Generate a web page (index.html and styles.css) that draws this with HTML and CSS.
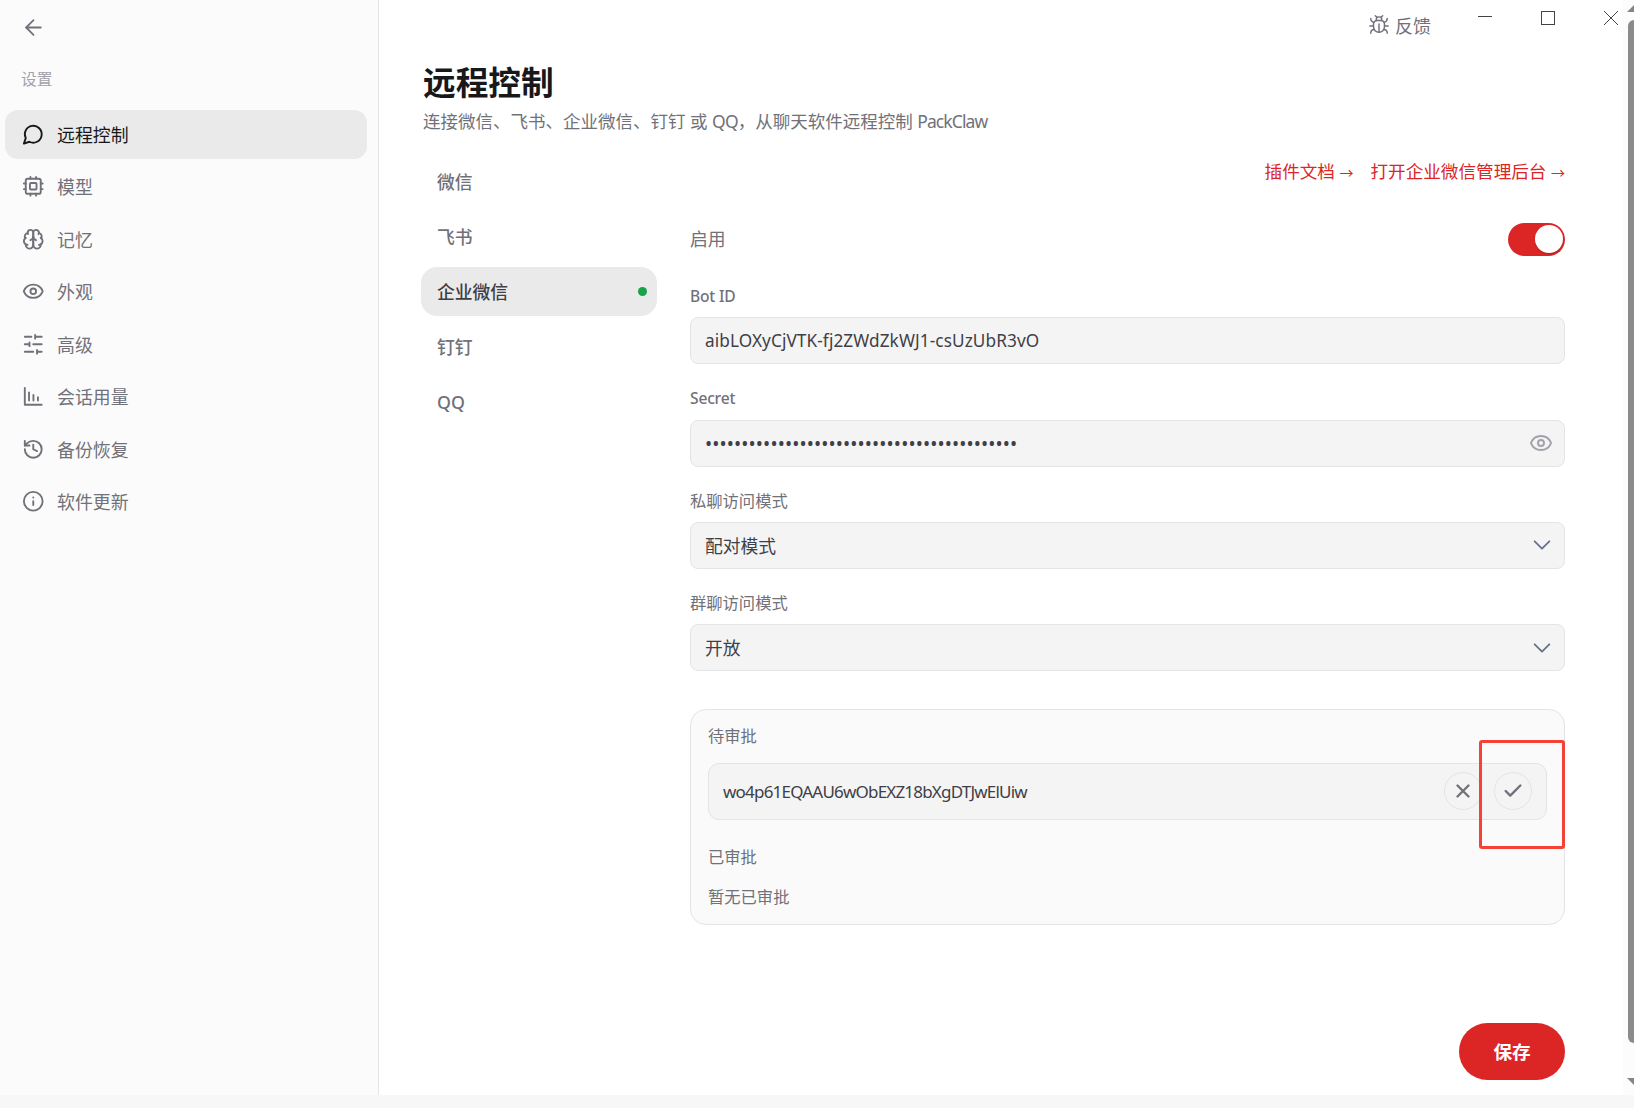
FILE: index.html
```html
<!DOCTYPE html>
<html lang="zh-CN">
<head>
    <meta charset="UTF-8">
    <meta name="viewport" content="width=device-width, initial-scale=1.0">
    <title>PackClaw</title>
    <link rel="stylesheet" href="styles.css">
</head>
<body>
    <div class="app">
        <aside class="sidebar">
            <button class="back-button" aria-label="返回">
                <svg class="icon" viewBox="0 0 24 24"><path d="m12 19-7-7 7-7"/><path d="M19 12H5"/></svg>
            </button>
            <div class="sidebar-title">设置</div>
            <nav class="menu">
                <a class="menu-item active">
                    <svg class="icon" viewBox="0 0 24 24"><path d="M7.9 20A9 9 0 1 0 4 16.1L2 22Z"/></svg>
                    <span>远程控制</span>
                </a>
                <a class="menu-item">
                    <svg class="icon" viewBox="0 0 24 24"><rect x="4" y="4" width="16" height="16" rx="2"/><rect x="8.5" y="8.5" width="7" height="7" rx="1"/><path d="M15 2v2M15 20v2M2 15h2M2 9h2M20 15h2M20 9h2M9 2v2M9 20v2"/></svg>
                    <span>模型</span>
                </a>
                <a class="menu-item">
                    <svg class="icon" viewBox="0 0 24 24"><path d="M12 5a3 3 0 1 0-5.997.125 4 4 0 0 0-2.526 5.77 4 4 0 0 0 .556 6.588A4 4 0 1 0 12 18Z"/><path d="M12 5a3 3 0 1 1 5.997.125 4 4 0 0 1 2.526 5.77 4 4 0 0 1-.556 6.588A4 4 0 1 1 12 18Z"/><path d="M15 13a4.5 4.5 0 0 1-3-4 4.5 4.5 0 0 1-3 4"/><path d="M17.599 6.5a3 3 0 0 0 .399-1.375M6.003 5.125A3 3 0 0 0 6.401 6.5M3.477 10.896a4 4 0 0 1 .585-.396M19.938 10.5a4 4 0 0 1 .585.396M6 18a4 4 0 0 1-1.967-.516M19.967 17.484A4 4 0 0 1 18 18"/></svg>
                    <span>记忆</span>
                </a>
                <a class="menu-item">
                    <svg class="icon" viewBox="0 0 24 24"><path d="M2.06 12.35a1 1 0 0 1 0-.7 10.75 10.75 0 0 1 19.88 0 1 1 0 0 1 0 .7 10.75 10.75 0 0 1-19.88 0"/><circle cx="12" cy="12" r="3"/></svg>
                    <span>外观</span>
                </a>
                <a class="menu-item">
                    <svg class="icon" viewBox="0 0 24 24"><path d="M21 4h-7M10 4H3M21 12h-9M8 12H3M21 20h-5M12 20H3M14 2v4M8 10v4M16 18v4"/></svg>
                    <span>高级</span>
                </a>
                <a class="menu-item">
                    <svg class="icon" viewBox="0 0 24 24"><path d="M3 3v18h18"/><path d="M7.5 16.5V8M12.2 16.5v-6M17 16.5V13"/></svg>
                    <span>会话用量</span>
                </a>
                <a class="menu-item">
                    <svg class="icon" viewBox="0 0 24 24"><path d="M3 12a9 9 0 1 0 9-9 9.75 9.75 0 0 0-6.74 2.74L3 8"/><path d="M3 3v5h5"/><path d="M12 7v5l4 2"/></svg>
                    <span>备份恢复</span>
                </a>
                <a class="menu-item">
                    <svg class="icon" viewBox="0 0 24 24"><circle cx="12" cy="12" r="10"/><path d="M12 16v-4M12 8h.01"/></svg>
                    <span>软件更新</span>
                </a>
            </nav>
        </aside>

        <main class="main">
            <div class="titlebar">
                <button class="feedback">
                    <svg class="icon" viewBox="0 0 24 24"><path d="m8 2 1.88 1.88M14.12 3.88 16 2M9 7.13v-1a3 3 0 1 1 6 0v1"/><path d="M12 20c-3.3 0-6-2.7-6-6v-3a4 4 0 0 1 4-4h4a4 4 0 0 1 4 4v3c0 3.3-2.7 6-6 6"/><path d="M12 20v-9M6.53 9C4.6 8.8 3 7.1 3 5M6 13H2M3 21c0-2.1 1.7-3.9 3.8-4M20.97 5c0 2.1-1.6 3.8-3.5 4M22 13h-4M17.2 17c2.1.1 3.8 1.9 3.8 4"/></svg>
                    <span>反馈</span>
                </button>
                <div class="window-buttons">
                    <svg viewBox="0 0 16 16"><path d="M1 6.5h14"/></svg>
                    <svg viewBox="0 0 16 16"><rect x="1.5" y="1.5" width="13" height="13"/></svg>
                    <svg viewBox="0 0 16 16"><path d="M1 1l14 14M15 1 1 15"/></svg>
                </div>
            </div>

            <div class="content">
                <h1>远程控制</h1>
                <p class="subtitle">连接微信、飞书、企业微信、钉钉 或 <span class="en">QQ</span>，从聊天软件远程控制 <span class="en">PackClaw</span></p>

                <div class="columns">
                    <div class="channels">
                        <div class="channel">微信</div>
                        <div class="channel">飞书</div>
                        <div class="channel active">企业微信<span class="dot"></span></div>
                        <div class="channel">钉钉</div>
                        <div class="channel">QQ</div>
                    </div>

                    <div class="form">
                        <div class="links">
                            <a>插件文档 <span class="arrow">→</span></a>
                            <a>打开企业微信管理后台 <span class="arrow">→</span></a>
                        </div>
                        <div class="enable-row">
                            <span>启用</span>
                            <div class="toggle"><div class="knob"></div></div>
                        </div>

                        <label class="latin">Bot ID</label>
                        <div class="field"><span class="bot-id">aibLOXyCjVTK-fj2ZWdZkWJ1-csUzUbR3vO</span></div>

                        <label class="latin">Secret</label>
                        <div class="field">
                            <span class="secret">•••••••••••••••••••••••••••••••••••••••••••</span>
                            <svg class="icon eye" viewBox="0 0 24 24"><path d="M2.06 12.35a1 1 0 0 1 0-.7 10.75 10.75 0 0 1 19.88 0 1 1 0 0 1 0 .7 10.75 10.75 0 0 1-19.88 0"/><circle cx="12" cy="12" r="3"/></svg>
                        </div>

                        <label>私聊访问模式</label>
                        <div class="field">
                            <span>配对模式</span>
                            <svg class="icon chevron" viewBox="0 0 24 24"><path d="m4 8 8 8 8-8"/></svg>
                        </div>

                        <label>群聊访问模式</label>
                        <div class="field">
                            <span>开放</span>
                            <svg class="icon chevron" viewBox="0 0 24 24"><path d="m4 8 8 8 8-8"/></svg>
                        </div>

                        <div class="approval">
                            <div class="approval-title">待审批</div>
                            <div class="request">
                                <span class="request-id">wo4p61EQAAU6wObEXZ18bXgDTJwElUiw</span>
                                <button class="round" aria-label="拒绝"><svg class="icon" viewBox="0 0 24 24"><path d="M18 6 6 18M6 6l12 12"/></svg></button>
                                <button class="round" aria-label="通过"><svg class="icon" viewBox="0 0 24 24"><path d="M20 6 9 17l-5-5"/></svg></button>
                            </div>
                            <div class="approval-title approved">已审批</div>
                            <div class="approval-title empty">暂无已审批</div>
                            <div class="highlight"></div>
                        </div>

                        <button class="save">保存</button>
                    </div>
                </div>
            </div>
        </main>

        <div class="scrollbar">
            <svg class="scroll-arrow" viewBox="0 0 16 8"><path d="M0 8 8 0l8 8z"/></svg>
            <div class="thumb"></div>
            <svg class="scroll-arrow" viewBox="0 0 16 8"><path d="M0 0h16L8 8z"/></svg>
        </div>
    </div>
</body>
</html>
```
FILE: styles.css
```css
* {
    box-sizing: border-box;
}

body {
    margin: 0;
    height: 1108px;
    overflow: hidden;
    background-color: #f7f7f7;
    font-family: "Noto Sans", "Noto Sans CJK SC", sans-serif;
    font-size: 17.8px;
    line-height: 24px;
    color: #71717a;
}

button {
    padding: 0;
    border: none;
    background: none;
    color: inherit;
    font: inherit;
}

.icon {
    display: block;
    flex: none;
    width: 22px;
    height: 22px;
    fill: none;
    stroke: currentColor;
    stroke-width: 2;
    stroke-linecap: round;
    stroke-linejoin: round;
}

.app {
    display: flex;
    height: 1095px;
    background-color: #ffffff;
}

/* sidebar */
.sidebar {
    width: 379px;
    padding: 15px 11px 0 5px;
    background-color: #fbfbfb;
    border-right: 1px solid #e4e4e7;
}

.back-button {
    display: block;
    margin-left: 15.5px;
}

.back-button .icon {
    width: 25px;
    height: 25px;
    stroke-width: 1.7;
}

.sidebar-title {
    margin: 26.5px 0 18px 16px;
    font-size: 15.7px;
    line-height: 25px;
    color: #a1a1aa;
}

.menu {
    display: flex;
    flex-direction: column;
    gap: 3px;
}

.menu-item {
    display: flex;
    align-items: center;
    gap: 13px;
    height: 49.5px;
    padding: 1px 0 0 16.5px;
    border-radius: 13px;
    font-size: 17.9px;
}

.menu-item .icon {
    width: 22.5px;
    height: 22.5px;
    margin-bottom: 2px;
}

.menu-item.active {
    background-color: #eaeaea;
    color: #18181b;
}

/* main area */
.main {
    flex: 1;
    padding-left: 42px;
}

.titlebar {
    display: flex;
    justify-content: flex-end;
    height: 62px;
    padding-right: 4px;
}

.feedback {
    display: flex;
    gap: 5px;
    height: 24px;
    margin: 14px 46px 0 0;
    font-size: 18px;
}

.feedback .icon {
    width: 22px;
    height: 22px;
    stroke-width: 1.6;
}

.window-buttons {
    display: flex;
    gap: 47px;
    padding-top: 10px;
}

.window-buttons svg {
    width: 16px;
    height: 16px;
    fill: none;
    stroke: #444444;
    stroke-width: 1;
}

.content {
    padding: 0 58px 0 2px;
}

h1 {
    margin: 0;
    font-size: 32.7px;
    line-height: 42px;
    font-weight: 700;
    color: #18181b;
}

.subtitle {
    margin: 5px 0 0;
    font-size: 17.5px;
}

.subtitle .en {
    letter-spacing: -0.9px;
}

.columns {
    display: flex;
    gap: 33px;
}

.channels {
    display: flex;
    flex-direction: column;
    gap: 6px;
    width: 236px;
    margin: 24px 0 0 -2px;
}

.channel {
    display: flex;
    align-items: center;
    justify-content: space-between;
    height: 49px;
    padding: 0 10px 0 16px;
    border-radius: 16px;
    font-weight: 500;
}

.channel.active {
    background-color: #eaeaea;
    color: #3f3f46;
}

.dot {
    width: 9px;
    height: 9px;
    border-radius: 50%;
    background-color: #16a34a;
}

/* settings form */
.form {
    width: 875px;
    padding-top: 26px;
}

.links {
    display: flex;
    justify-content: flex-end;
    gap: 17px;
    color: #dc2626;
    font-size: 17.6px;
}

.arrow {
    font-size: 14px;
}

.enable-row {
    display: flex;
    align-items: center;
    justify-content: space-between;
    height: 34px;
    margin: 37px 0 28px;
}

.toggle {
    display: flex;
    justify-content: flex-end;
    width: 57px;
    height: 33px;
    padding: 2.5px;
    border-radius: 17px;
    background-color: #dc2626;
}

.knob {
    width: 28px;
    height: 28px;
    border-radius: 50%;
    background-color: #ffffff;
    box-shadow: 0 1px 2px rgba(0, 0, 0, 0.2);
}

label {
    display: block;
    height: 33.3px;
    font-size: 16.3px;
    line-height: 24px;
}

label.latin {
    font-size: 15.6px;
    font-weight: 500;
    letter-spacing: -0.2px;
}

.field {
    display: flex;
    align-items: center;
    justify-content: space-between;
    height: 47px;
    margin-bottom: 22px;
    padding: 1px 13px 0 14px;
    border: 1px solid #e4e4e7;
    border-radius: 8px;
    background-color: #f4f4f5;
    color: #3f3f46;
}

.bot-id {
    font-size: 17.2px;
    letter-spacing: 0.1px;
}

.secret {
    font-size: 19px;
    letter-spacing: 0.12px;
}

.eye {
    width: 24px;
    height: 24px;
    margin: 0 -1.5px 2px 0;
    color: #a1a1aa;
    stroke-width: 1.9;
}

.chevron {
    margin: 0 -2px 1px 0;
    color: #64748b;
}

.approval {
    position: relative;
    height: 216px;
    margin-top: 38px;
    padding: 14px 17px;
    border: 1px solid #e4e4e7;
    border-radius: 16px;
    background-color: #fafafa;
}

.approval-title {
    font-size: 16.3px;
}

.request {
    display: flex;
    align-items: center;
    gap: 12px;
    height: 57px;
    margin: 15px 0 25px;
    padding: 0 14px;
    border: 1px solid #e4e4e7;
    border-radius: 11px;
    background-color: #f4f4f5;
    color: #3f3f46;
}

.request-id {
    flex: 1;
    font-size: 17px;
    letter-spacing: -0.8px;
}

.round {
    display: flex;
    align-items: center;
    justify-content: center;
    width: 38px;
    height: 38px;
    margin-bottom: 2px;
    border: 1px solid #e4e4e7;
    border-radius: 50%;
    color: #71717a;
}

.round .icon {
    width: 22px;
    height: 22px;
    stroke-width: 2.6;
}

.approved {
    margin-bottom: 15.5px;
}

.highlight {
    position: absolute;
    top: 30px;
    right: -1px;
    width: 86px;
    height: 109px;
    border: 3px solid #f44336;
    border-radius: 3px;
}

.save {
    display: block;
    width: 106px;
    height: 57px;
    margin: 98px 0 0 auto;
    border-radius: 29px;
    background-color: #dc2626;
    color: #ffffff;
    font-size: 18.6px;
    font-weight: 700;
}

/* right edge is cut off by the window */
.scrollbar {
    display: flex;
    flex-direction: column;
    justify-content: space-between;
    width: 11px;
    padding: 4px 0 9px 5px;
    overflow: hidden;
    background-color: #fcfcfc;
}

.scroll-arrow {
    flex: none;
    width: 16px;
    height: 8px;
    margin-left: -1px;
    fill: #858585;
}

.thumb {
    width: 12px;
    height: 1023px;
    margin-bottom: 27px;
    border-radius: 6px;
    background-color: #8b8b8b;
}
```
